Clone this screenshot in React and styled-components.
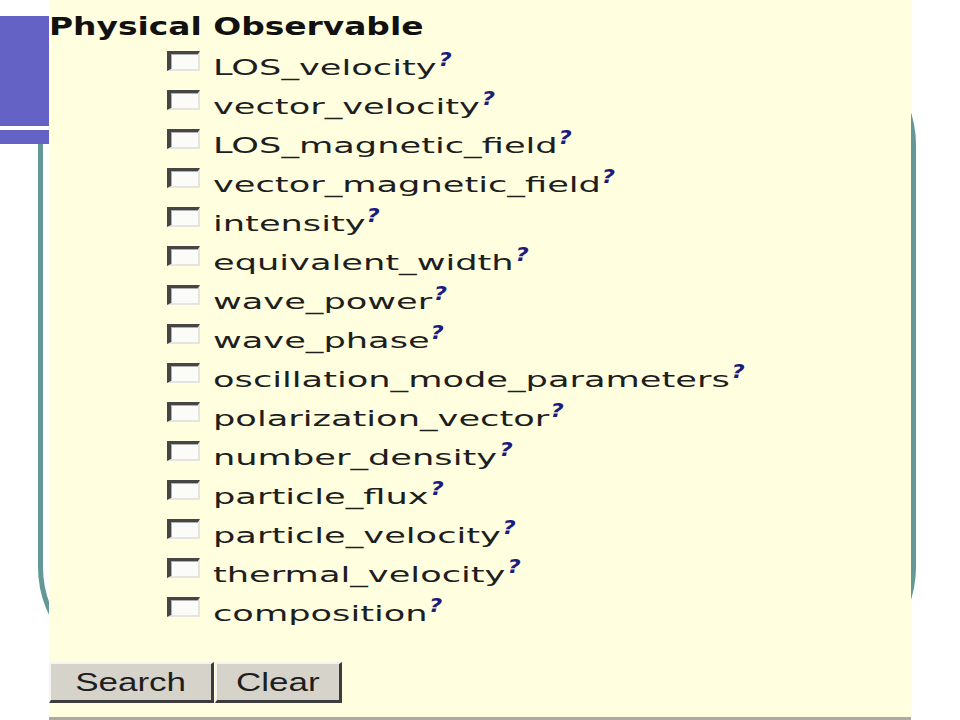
import React from 'react'
import styled, { createGlobalStyle } from 'styled-components'

const GlobalStyle = createGlobalStyle`
    html, body {
        margin: 0;
        padding: 0;
        background: #ffffff;
    }
`

const Slide = styled.div`
    position: relative;
    width: 960px;
    height: 720px;
    overflow: hidden;
    background: #ffffff;
`

// slide template decorations (sit behind the pasted screenshot)
const CornerBlock = styled.div`
    position: absolute;
    left: 0;
    top: 16px;
    width: 49px;
    height: 128px;
    background: linear-gradient(
        to bottom,
        #6562c6 0,
        #6562c6 110px,
        #ffffff 110px,
        #ffffff 114px,
        #6562c6 114px
    );
    z-index: 2;
`

const Frame = styled.div`
    position: absolute;
    left: 38px;
    top: 35px;
    width: 868px;
    height: 632px;
    border: 5px solid #639896;
    border-radius: 110px;
    z-index: 0;
`

const Panel = styled.div`
    position: absolute;
    left: 49px;
    top: 0;
    width: 862px;
    height: 717px;
    background: #ffffe0;
    border-bottom: 3px solid #aaa9a2;
    overflow: hidden;
    z-index: 1;
`

const Stretch = styled.span`
    display: inline-block;
    white-space: nowrap;
    transform: scaleX(${(p) => p.$sx});
    transform-origin: ${(p) => p.$origin || 'left center'};
`

const Heading = styled.h2`
    margin: 0;
    padding-top: 15px;
    font-family: "DejaVu Sans", Verdana, sans-serif;
    font-weight: bold;
    font-size: 24px;
    line-height: 24px;
    color: #111111;
`

const ObservableList = styled.ul`
    list-style: none;
    margin: 9px 0 0;
    padding: 0 0 0 118px;
`

const Row = styled.li`
    display: flex;
    align-items: flex-start;
    height: 39px;
`

const CheckBox = styled.span`
    box-sizing: border-box;
    flex: none;
    width: 33px;
    height: 20px;
    margin-top: 3px;
    margin-right: 13px;
    background: #fbfbf8;
    border-style: solid;
    border-width: 3px 2px 2px 4px;
    border-color: #454545 #e4e4e0 #e4e4e0 #454545;
    box-shadow: inset 1px 1px 0 #b0b0b0;
`

const Label = styled.span`
    font-family: "DejaVu Sans", Verdana, sans-serif;
    font-size: 22px;
    line-height: 39px;
    color: #1e1e1e;
`

const Help = styled.span`
    display: inline-block;
    margin-left: 1px;
    font-family: "DejaVu Sans", Verdana, sans-serif;
    font-weight: bold;
    font-style: italic;
    font-size: 19px;
    line-height: 1;
    vertical-align: 9px;
    color: #1c1c80;
    transform: scaleX(0.75);
    transform-origin: left center;
`

const ButtonBar = styled.div`
    display: flex;
    gap: 1px;
    margin-top: 29px;
`

const FormButton = styled.button`
    box-sizing: border-box;
    width: ${(p) => p.$w}px;
    height: 41px;
    padding: 0;
    background: #d6d3cb;
    border-style: solid;
    border-width: 2px 3px 3px 2px;
    border-color: #f4f4f0 #3c3c3c #3c3c3c #f4f4f0;
    font-family: "Liberation Sans", Arial, sans-serif;
    font-size: 25px;
    color: #1e1e1e;
    text-align: center;
`

const observables = [
    'LOS_velocity',
    'vector_velocity',
    'LOS_magnetic_field',
    'vector_magnetic_field',
    'intensity',
    'equivalent_width',
    'wave_power',
    'wave_phase',
    'oscillation_mode_parameters',
    'polarization_vector',
    'number_density',
    'particle_flux',
    'particle_velocity',
    'thermal_velocity',
    'composition',
]

export default function App() {
    return (
        <>
            <GlobalStyle />
            <Slide>
                <Frame />
                <CornerBlock />
                <Panel>
                    <Heading>
                        <Stretch $sx={1.37}>Physical Observable</Stretch>
                    </Heading>
                    <ObservableList>
                        {observables.map((name) => (
                            <Row key={name}>
                                <CheckBox />
                                <Label>
                                    <Stretch $sx={1.6}>
                                        {name}
                                        <Help>?</Help>
                                    </Stretch>
                                </Label>
                            </Row>
                        ))}
                    </ObservableList>
                    <ButtonBar>
                        <FormButton $w={165}>
                            <Stretch $sx={1.4} $origin="center">Search</Stretch>
                        </FormButton>
                        <FormButton $w={127}>
                            <Stretch $sx={1.4} $origin="center">Clear</Stretch>
                        </FormButton>
                    </ButtonBar>
                </Panel>
            </Slide>
        </>
    )
}
